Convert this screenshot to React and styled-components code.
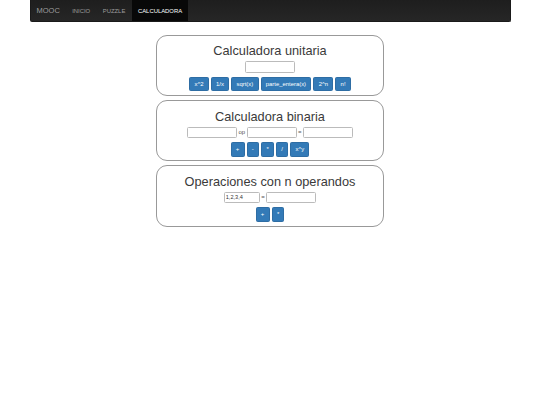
import React from "react"
import styled, { createGlobalStyle } from "styled-components"

const GlobalStyle = createGlobalStyle`
    html, body {
        margin: 0;
        padding: 0;
        background: #fff;
        font-family: "Liberation Sans", Arial, sans-serif;
        color: #333;
    }
`

const Page = styled.div`
    width: 540px;
    height: 405px;
    overflow: hidden;
`

const Navbar = styled.nav`
    width: 481px;
    height: 22px;
    margin: 0 auto 12.5px;
    display: flex;
    background: linear-gradient(to bottom, #1e1e1e, #262626);
    border: 1px solid #1a1a1a;
    border-top: none;
    border-radius: 0 0 2px 2px;
    box-sizing: border-box;
`

const Brand = styled.span`
    padding: 0 6px 0 6px;
    line-height: 22px;
    font-size: 7.5px;
    color: #9d9d9d;
`

const NavItem = styled.span`
    padding: 0 6.3px;
    line-height: 22px;
    font-size: 5.9px;
    color: ${(p) => (p.$active ? "#fff" : "#9d9d9d")};
    background: ${(p) => (p.$active ? "#080808" : "transparent")};
`

const Cards = styled.main`
    display: flex;
    flex-direction: column;
    align-items: center;
    gap: 4px;
`

const Card = styled.section`
    width: 228px;
    height: ${(p) => p.$height}px;
    box-sizing: border-box;
    border: 1px solid #999;
    border-radius: 11px;
    display: flex;
    flex-direction: column;
    align-items: center;
`

const Title = styled.h3`
    margin: 7.5px 0 3px;
    font-size: 12.75px;
    line-height: 15px;
    font-weight: 500;
    color: #3a3a3a;
`

const Row = styled.div`
    display: flex;
    align-items: center;
    justify-content: center;
    gap: 1.5px;
    font-size: 6px;
    color: #555;
`

const Field = styled.input`
    width: ${(p) => p.$width || 50}px;
    height: 11.5px;
    box-sizing: border-box;
    padding: 0 1px;
    border: 1px solid #bbb;
    border-radius: 1.5px;
    background: #fff;
    font-family: inherit;
    font-size: 5.6px;
    color: #333;
    outline: none;
`

const Buttons = styled.div`
    display: flex;
    justify-content: center;
    gap: 2px;
    margin-top: 4px;
`

const Button = styled.button`
    height: 14.5px;
    box-sizing: border-box;
    padding: 0 4.3px;
    border: 1px solid #2e6da4;
    border-radius: 1.5px;
    background: #337ab7;
    color: #fff;
    font-family: inherit;
    font-size: 5.9px;
`

const App = () => {
    return (
        <Page>
            <GlobalStyle />
            <Navbar>
                <Brand>MOOC</Brand>
                <NavItem>INICIO</NavItem>
                <NavItem>PUZZLE</NavItem>
                <NavItem $active>CALCULADORA</NavItem>
            </Navbar>
            <Cards>
                <Card $height={61.5}>
                    <Title>Calculadora unitaria</Title>
                    <Row>
                        <Field />
                    </Row>
                    <Buttons>
                        <Button>x^2</Button>
                        <Button>1/x</Button>
                        <Button>sqrt(x)</Button>
                        <Button>parte_entera(x)</Button>
                        <Button>2^n</Button>
                        <Button>n!</Button>
                    </Buttons>
                </Card>
                <Card $height={61}>
                    <Title>Calculadora binaria</Title>
                    <Row>
                        <Field />
                        <span>op</span>
                        <Field />
                        <span>=</span>
                        <Field />
                    </Row>
                    <Buttons>
                        <Button>+</Button>
                        <Button>-</Button>
                        <Button>*</Button>
                        <Button>/</Button>
                        <Button>x^y</Button>
                    </Buttons>
                </Card>
                <Card $height={61.5}>
                    <Title>Operaciones con n operandos</Title>
                    <Row>
                        <Field $width={36} defaultValue="1,2,3,4" />
                        <span>=</span>
                        <Field />
                    </Row>
                    <Buttons>
                        <Button>+</Button>
                        <Button>*</Button>
                    </Buttons>
                </Card>
            </Cards>
        </Page>
    )
}

export default App
